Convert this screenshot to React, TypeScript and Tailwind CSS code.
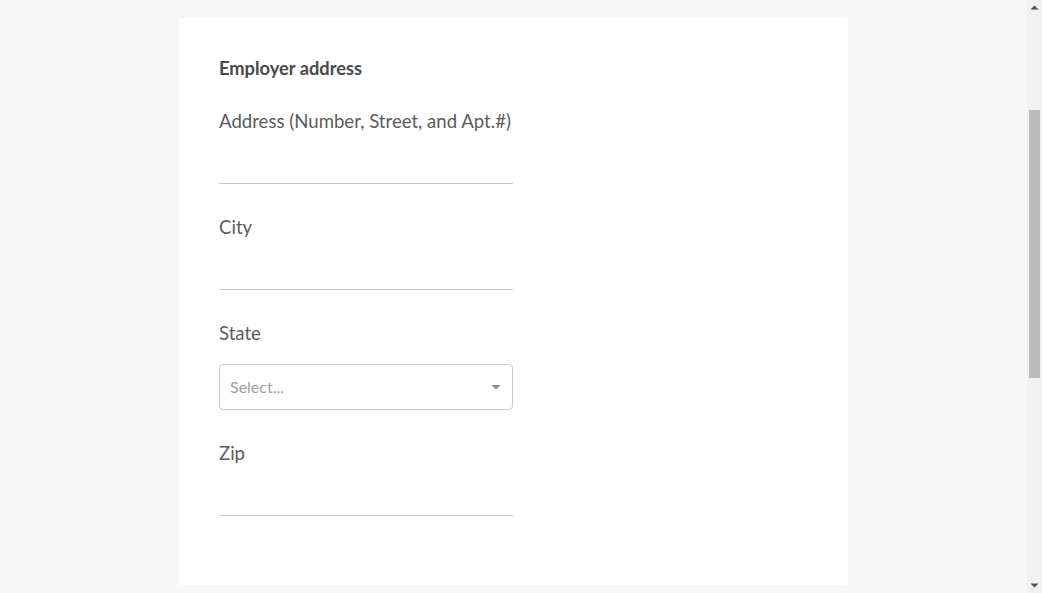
const font = { fontFamily: "Lato, 'Noto Sans', sans-serif" }

const LineField = ({ label }: { label: string }) => {
  return (
    <div className="mb-[29px] w-[294px]">
      <label className="block text-[18.6px] leading-[28px] text-[#5b5b5b]">{label}</label>
      <input
        type="text"
        className="block h-[49px] w-full border-b border-[#c8c8c8] bg-transparent text-[16px] text-[#4a4a4a] outline-none"
      />
    </div>
  )
}

const SelectField = ({ label }: { label: string }) => {
  return (
    <div className="mb-[29px] w-[294px]">
      <label className="block text-[18.6px] leading-[28px] text-[#5b5b5b]">{label}</label>
      <div className="mt-[17px] flex h-[46px] w-full items-center justify-between rounded-[4px] border border-[#cccccc] bg-white pl-[10px] pr-[10px]">
        <span className="text-[16px] text-[#a0a0a0]">Select...</span>
        <svg width="12" height="12" viewBox="0 0 12 12" className="text-[#8a8a8a]">
          <path d="M1.5 4 L10.5 4 L6 8.5 Z" fill="currentColor" />
        </svg>
      </div>
    </div>
  )
}

// window scrollbar, drawn because the browser hides its own
const Scrollbar = () => {
  return (
    <div className="flex h-full w-[15px] shrink-0 flex-col bg-[#f1f1f1]">
      <div className="flex h-[17px] items-center justify-center">
        <svg width="15" height="17" viewBox="0 0 15 17">
          <path d="M3.5 9.5 L11.5 9.5 L7.5 5.5 Z" fill="#505050" />
        </svg>
      </div>
      <div className="flex-1 px-[2px] pt-[93px]">
        <div className="h-[268px] bg-[#bcbcbc]" />
      </div>
      <div className="flex h-[17px] items-center justify-center">
        <svg width="15" height="17" viewBox="0 0 15 17">
          <path d="M3.5 7.5 L11.5 7.5 L7.5 11.5 Z" fill="#505050" />
        </svg>
      </div>
    </div>
  )
}

const App = () => {
  return (
    <div className="flex h-screen overflow-hidden bg-[#f7f7f7]" style={font}>
      <main className="flex-1 overflow-hidden pt-[18px]">
        <section className="mx-auto w-[669px] rounded-[3px] bg-white px-[40px] pb-[69px] pt-[38px]">
          <h2 className="mb-[27px] text-[18.3px] font-bold leading-[24px] text-[#4a4a4a]">Employer address</h2>
          <LineField label="Address (Number, Street, and Apt.#)" />
          <LineField label="City" />
          <SelectField label="State" />
          <div className="w-[294px]">
            <label className="block text-[18.6px] leading-[28px] text-[#5b5b5b]">Zip</label>
            <input
              type="text"
              className="block h-[49px] w-full border-b border-[#c8c8c8] bg-transparent text-[16px] text-[#4a4a4a] outline-none"
            />
          </div>
        </section>
      </main>
      <Scrollbar />
    </div>
  )
}
export default App
